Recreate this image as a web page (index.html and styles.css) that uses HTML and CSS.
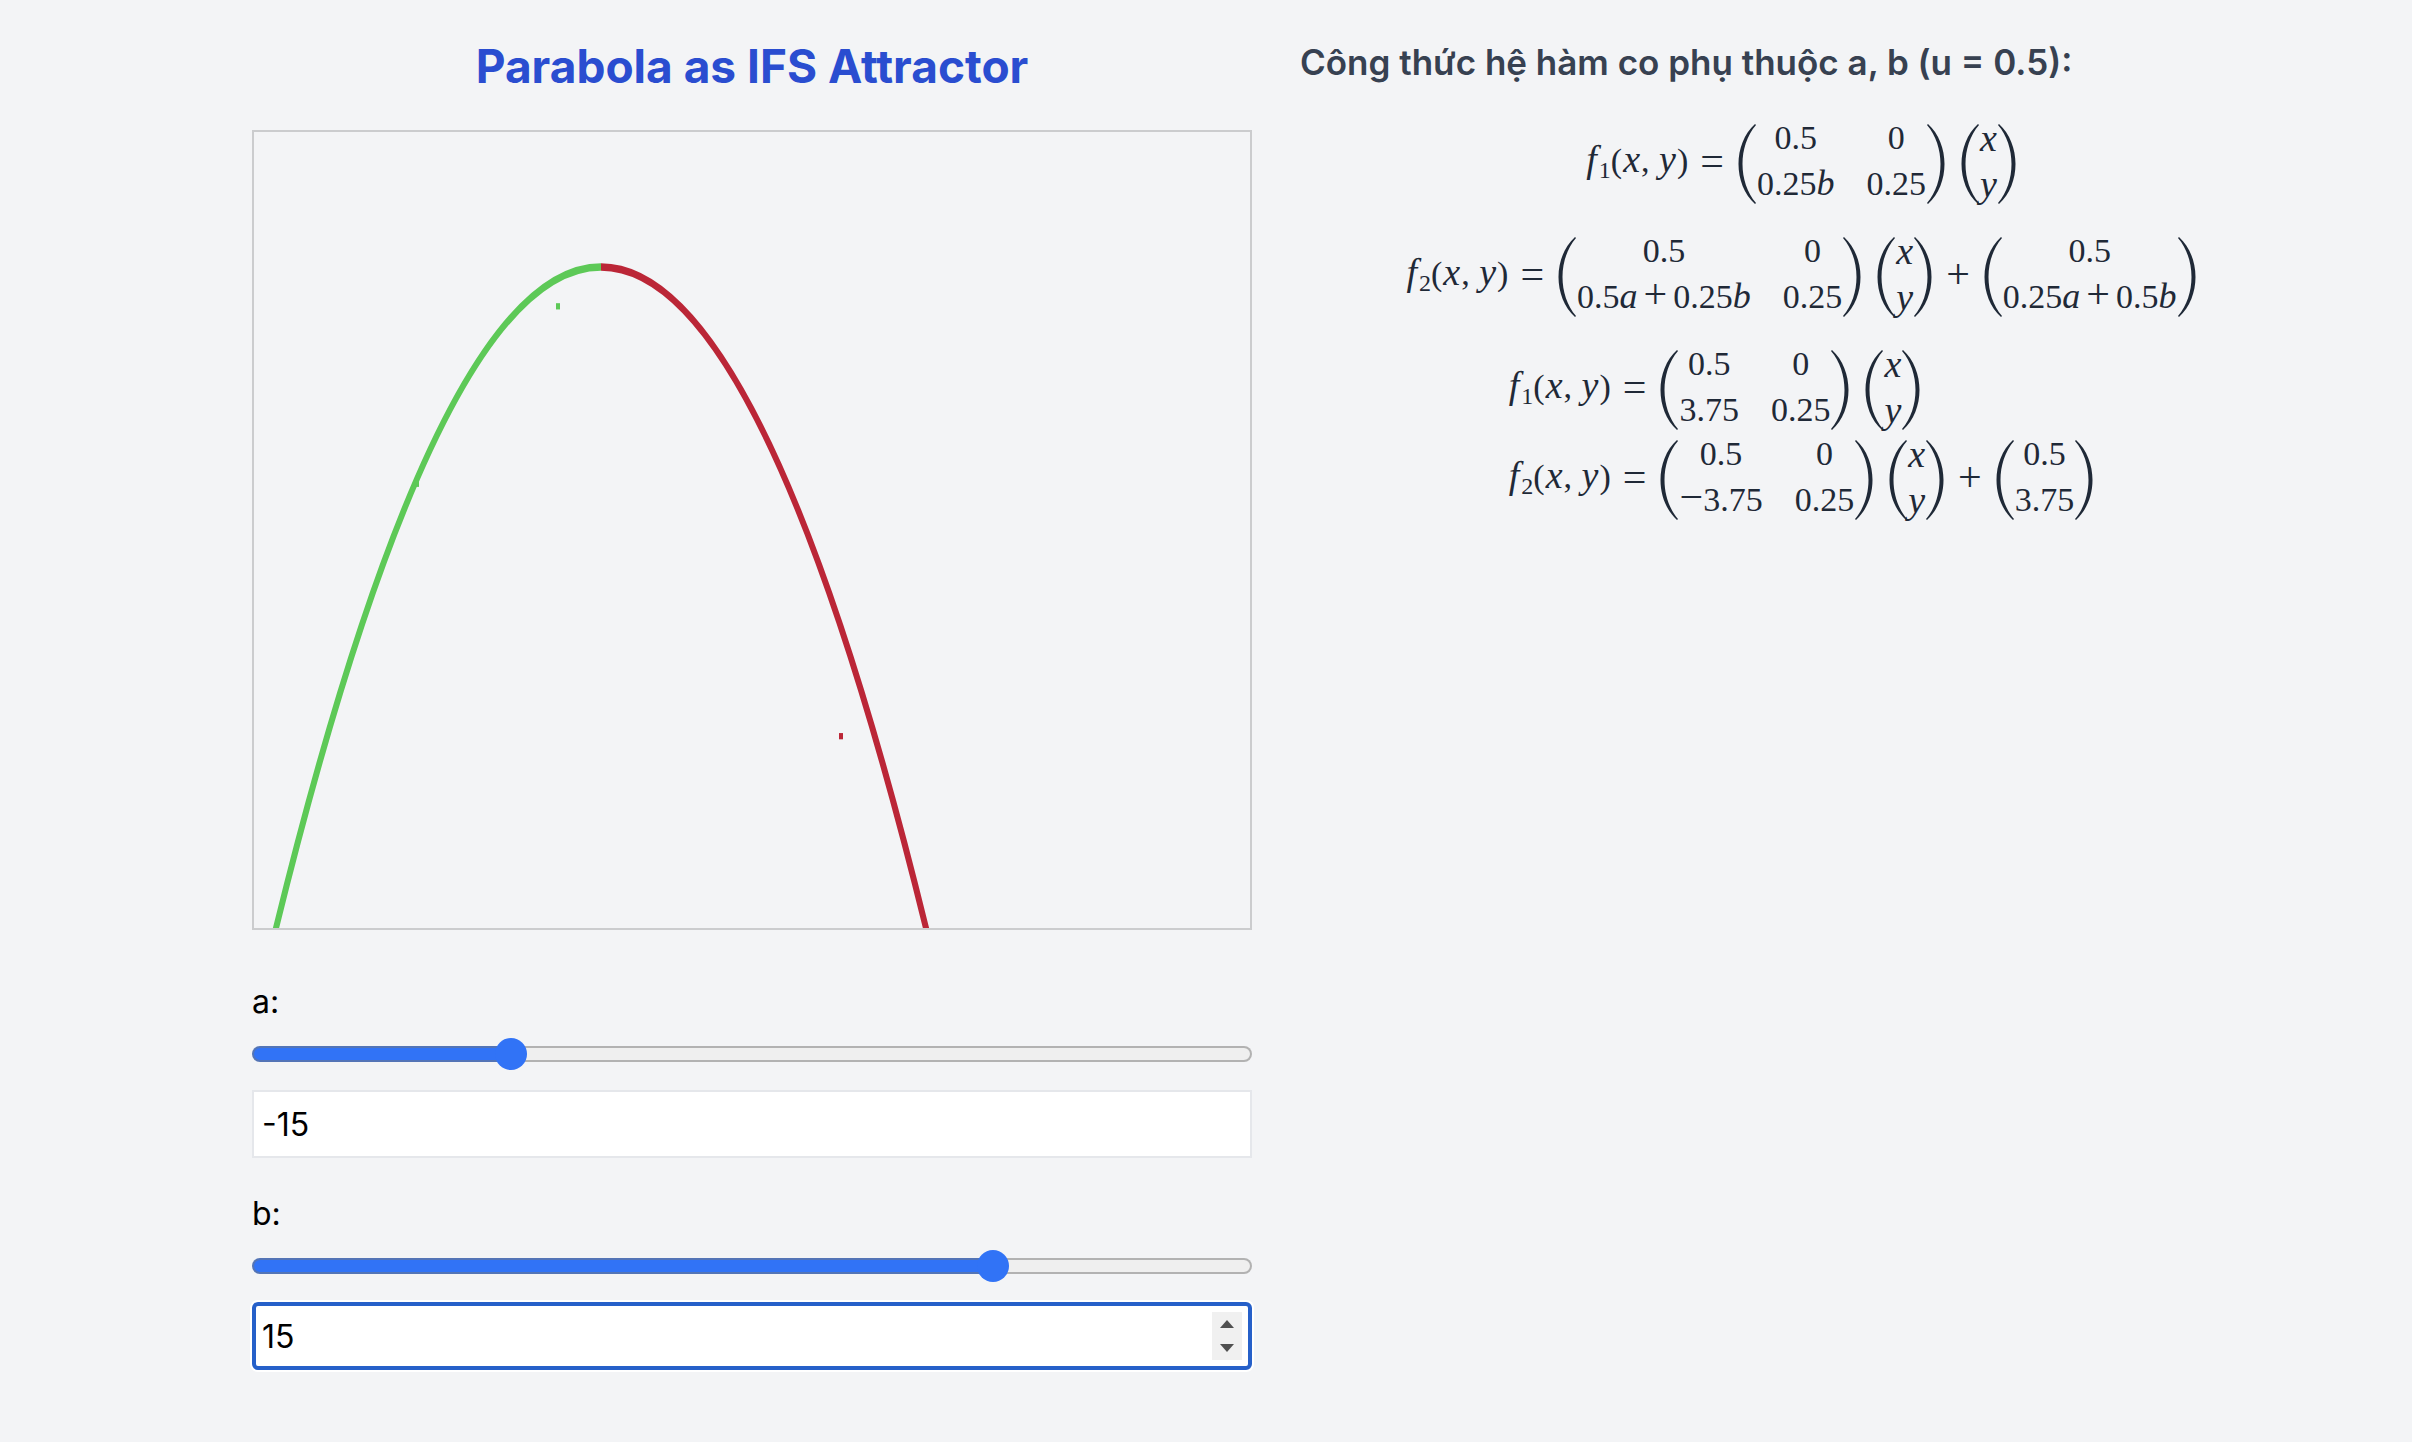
FILE: index.html
```html
<!DOCTYPE html>
<html lang="vi">
<head>
<meta charset="utf-8">
<meta name="viewport" content="width=device-width, initial-scale=1">
<title>Parabola as IFS Attractor</title>
<link rel="stylesheet" href="styles.css">
</head>
<body>
<svg class="defs" aria-hidden="true">
  <symbol id="open" viewBox="0 0 18 80" preserveAspectRatio="none"><path d="M17 0C-5 20-5 60 17 80L18 79C0 58 0 22 18 1Z"/></symbol>
  <symbol id="close" viewBox="0 0 18 80" preserveAspectRatio="none"><path d="M1 0C23 20 23 60 1 80L0 79C18 58 18 22 0 1Z"/></symbol>
</svg>
<main class="page">
  <section class="plot">
    <h1 class="title">Parabola as IFS Attractor</h1>
    <svg class="canvas" viewBox="0 0 996 637" preserveAspectRatio="none" role="img" aria-label="Parabola">
      <path class="left" d="M18 650L22 637Q184.500 108 347 108"/>
      <path class="right" d="M347 108Q509.500 108 672 637L676 650"/>
      <rect class="dot-left" x="302" y="137" width="4" height="5"/>
      <rect class="dot-left" x="161" y="279" width="4" height="5"/>
      <rect class="dot-right" x="585" y="481" width="4" height="5"/>
    </svg>
    <div class="control">
      <label for="a-range">a:</label>
      <input class="slider slider-a" id="a-range" type="range" min="-30" max="30" value="-15">
      <div class="field"><input class="number" type="number" value="-15" aria-label="a"></div>
    </div>
    <div class="control">
      <label for="b-range">b:</label>
      <input class="slider slider-b" id="b-range" type="range" min="-30" max="30" value="15">
      <div class="field">
        <input class="number active" type="number" value="15" aria-label="b">
        <div class="spinner">
          <button type="button" tabindex="-1" aria-label="+"><svg viewBox="0 0 14 8"><path d="M7 0L14 8H0Z"/></svg></button>
          <button type="button" tabindex="-1" aria-label="-"><svg viewBox="0 0 14 8"><path d="M0 0H14L7 8Z"/></svg></button>
        </div>
      </div>
    </div>
  </section>

  <section class="formulas">
    <h2 class="subtitle">Công thức hệ hàm co phụ thuộc a, b (u = 0.5):</h2>
    <div class="equations">
      <div class="eq">
        <span class="fn"><i class="f">f</i><sub>1</sub>(<i>x</i>, <i>y</i>)</span><span class="op">=</span>
        <span class="group"><svg class="paren"><use href="#open"/></svg><span class="matrix two"><span>0.5</span><span>0</span><span>0.25<i>b</i></span><span>0.25</span></span><svg class="paren"><use href="#close"/></svg></span>
        <span class="group"><svg class="paren"><use href="#open"/></svg><span class="matrix"><i>x</i><i>y</i></span><svg class="paren"><use href="#close"/></svg></span>
      </div>
      <div class="eq">
        <span class="fn"><i class="f">f</i><sub>2</sub>(<i>x</i>, <i>y</i>)</span><span class="op">=</span>
        <span class="group"><svg class="paren"><use href="#open"/></svg><span class="matrix two"><span>0.5</span><span>0</span><span>0.5<i>a</i><b>+</b>0.25<i>b</i></span><span>0.25</span></span><svg class="paren"><use href="#close"/></svg></span>
        <span class="group"><svg class="paren"><use href="#open"/></svg><span class="matrix"><i>x</i><i>y</i></span><svg class="paren"><use href="#close"/></svg></span>
        <span class="op plus">+</span>
        <span class="group"><svg class="paren"><use href="#open"/></svg><span class="matrix"><span>0.5</span><span>0.25<i>a</i><b>+</b>0.5<i>b</i></span></span><svg class="paren"><use href="#close"/></svg></span>
      </div>
      <div class="aligned">
        <div class="eq">
          <span class="fn"><i class="f">f</i><sub>1</sub>(<i>x</i>, <i>y</i>)</span><span class="op">=</span>
          <span class="group"><svg class="paren"><use href="#open"/></svg><span class="matrix two"><span>0.5</span><span>0</span><span>3.75</span><span>0.25</span></span><svg class="paren"><use href="#close"/></svg></span>
          <span class="group"><svg class="paren"><use href="#open"/></svg><span class="matrix"><i>x</i><i>y</i></span><svg class="paren"><use href="#close"/></svg></span>
        </div>
        <div class="eq">
          <span class="fn"><i class="f">f</i><sub>2</sub>(<i>x</i>, <i>y</i>)</span><span class="op">=</span>
          <span class="group"><svg class="paren"><use href="#open"/></svg><span class="matrix two"><span>0.5</span><span>0</span><span><b class="minus">−</b>3.75</span><span>0.25</span></span><svg class="paren"><use href="#close"/></svg></span>
          <span class="group"><svg class="paren"><use href="#open"/></svg><span class="matrix"><i>x</i><i>y</i></span><svg class="paren"><use href="#close"/></svg></span>
          <span class="op plus">+</span>
          <span class="group"><svg class="paren"><use href="#open"/></svg><span class="matrix"><span>0.5</span><span>3.75</span></span><svg class="paren"><use href="#close"/></svg></span>
        </div>
      </div>
    </div>
  </section>
</main>
</body>
</html>
```
FILE: styles.css
```css
* { box-sizing: border-box; }
body {
  margin: 0;
  background: #f3f4f6;
  color: #000;
  font: 32px/48px Inter, "Liberation Sans", sans-serif;
}
.defs { position: absolute; width: 0; height: 0; }
.page {
  display: grid;
  grid-template-columns: 1fr 1fr;
  gap: 48px;
  padding: 34px 112px 64px 252px;
}
.title {
  margin: 0 0 32px;
  color: #2a4dd0;
  font-size: 46px;
  line-height: 64px;
  font-weight: 700;
  text-align: center;
}
.canvas {
  display: block;
  width: 100%;
  aspect-ratio: 5 / 4;
  border: 2px solid #cbccce;
}
.canvas path { fill: none; stroke-width: 6; }
.left { stroke: #5dc957; }
.right { stroke: #bb2637; }
.dot-left { fill: #5dc957; }
.dot-right { fill: #bb2637; }

.control { margin-top: 32px; }
.canvas + .control { margin-top: 48px; }
.control label { display: block; }
.slider {
  appearance: none;
  display: block;
  width: 100%;
  height: 32px;
  margin: 12px 0 20px;
  background: none;
}
.slider::-webkit-slider-runnable-track {
  height: 16px;
  border: 2px solid rgba(117, 117, 117, 0.5);
  border-radius: 8px;
  background: linear-gradient(to right, #3173f6 var(--fill), #efefef var(--fill)) border-box;
}
.slider-a { --fill: 26%; }
.slider-b { --fill: 74%; }
.slider::-webkit-slider-thumb {
  appearance: none;
  width: 32px;
  height: 32px;
  margin-top: -10px;
  border-radius: 50%;
  background: #3173f6;
}
.field { position: relative; }
.number {
  appearance: textfield;
  display: block;
  width: 100%;
  height: 68px;
  padding: 8px;
  border: 2px solid #e5e7eb;
  border-radius: 0;
  background: #fff;
  color: #000;
  font: inherit;
}
.number::-webkit-inner-spin-button { appearance: none; margin: 0; }
.number.active {
  padding: 6px;
  border: 4px solid #2660c9;
  border-radius: 6px;
  box-shadow: 0 0 0 2px #fff;
  outline: none;
}
.spinner {
  position: absolute;
  top: 10px;
  right: 10px;
  display: grid;
  width: 30px;
  height: 48px;
  background: #f0f0f0;
}
.spinner button {
  display: grid;
  place-items: center;
  padding: 0;
  border: 0;
  background: none;
}
.spinner svg { width: 14px; height: 8px; fill: #505050; }

.subtitle {
  margin: 0 0 26px;
  color: #374151;
  font-size: 35px;
  line-height: 56px;
  font-weight: 600;
}
.equations {
  display: flex;
  flex-direction: column;
  align-items: center;
  gap: 23px;
  color: #1f2937;
  font: 34px/46px "Liberation Serif", serif;
}
.eq { display: flex; align-items: center; height: 90px; }
.eq i { font-size: 38px; line-height: 40px; }
.fn i { margin: 0 1px; }
.eq .f { margin: 0 2px; }
.eq sub { font-size: 24px; line-height: 24px; vertical-align: -6px; }
.fn { white-space: nowrap; }
.op, .eq b { font-size: 42px; font-weight: 400; }
.op { margin: 0 14px 0 12px; }
.plus { margin: 0 14px; }
.eq b { margin: 0 6px; line-height: 40px; }
.eq .minus { margin: 0; }
.group { display: flex; align-items: center; }
.group + .group { margin-left: 16px; }
.matrix {
  display: grid;
  grid-auto-rows: 46px;
  column-gap: 32px;
  justify-items: center;
  padding: 0 1px;
  white-space: nowrap;
}
.two { grid-template-columns: auto auto; }
.matrix i { line-height: 46px; }
.matrix span i { line-height: 40px; font-size: 36px; }
.paren {
  width: 18px;
  height: 80px;
  margin-top: 6px;
  fill: #1f2937;
}
```
